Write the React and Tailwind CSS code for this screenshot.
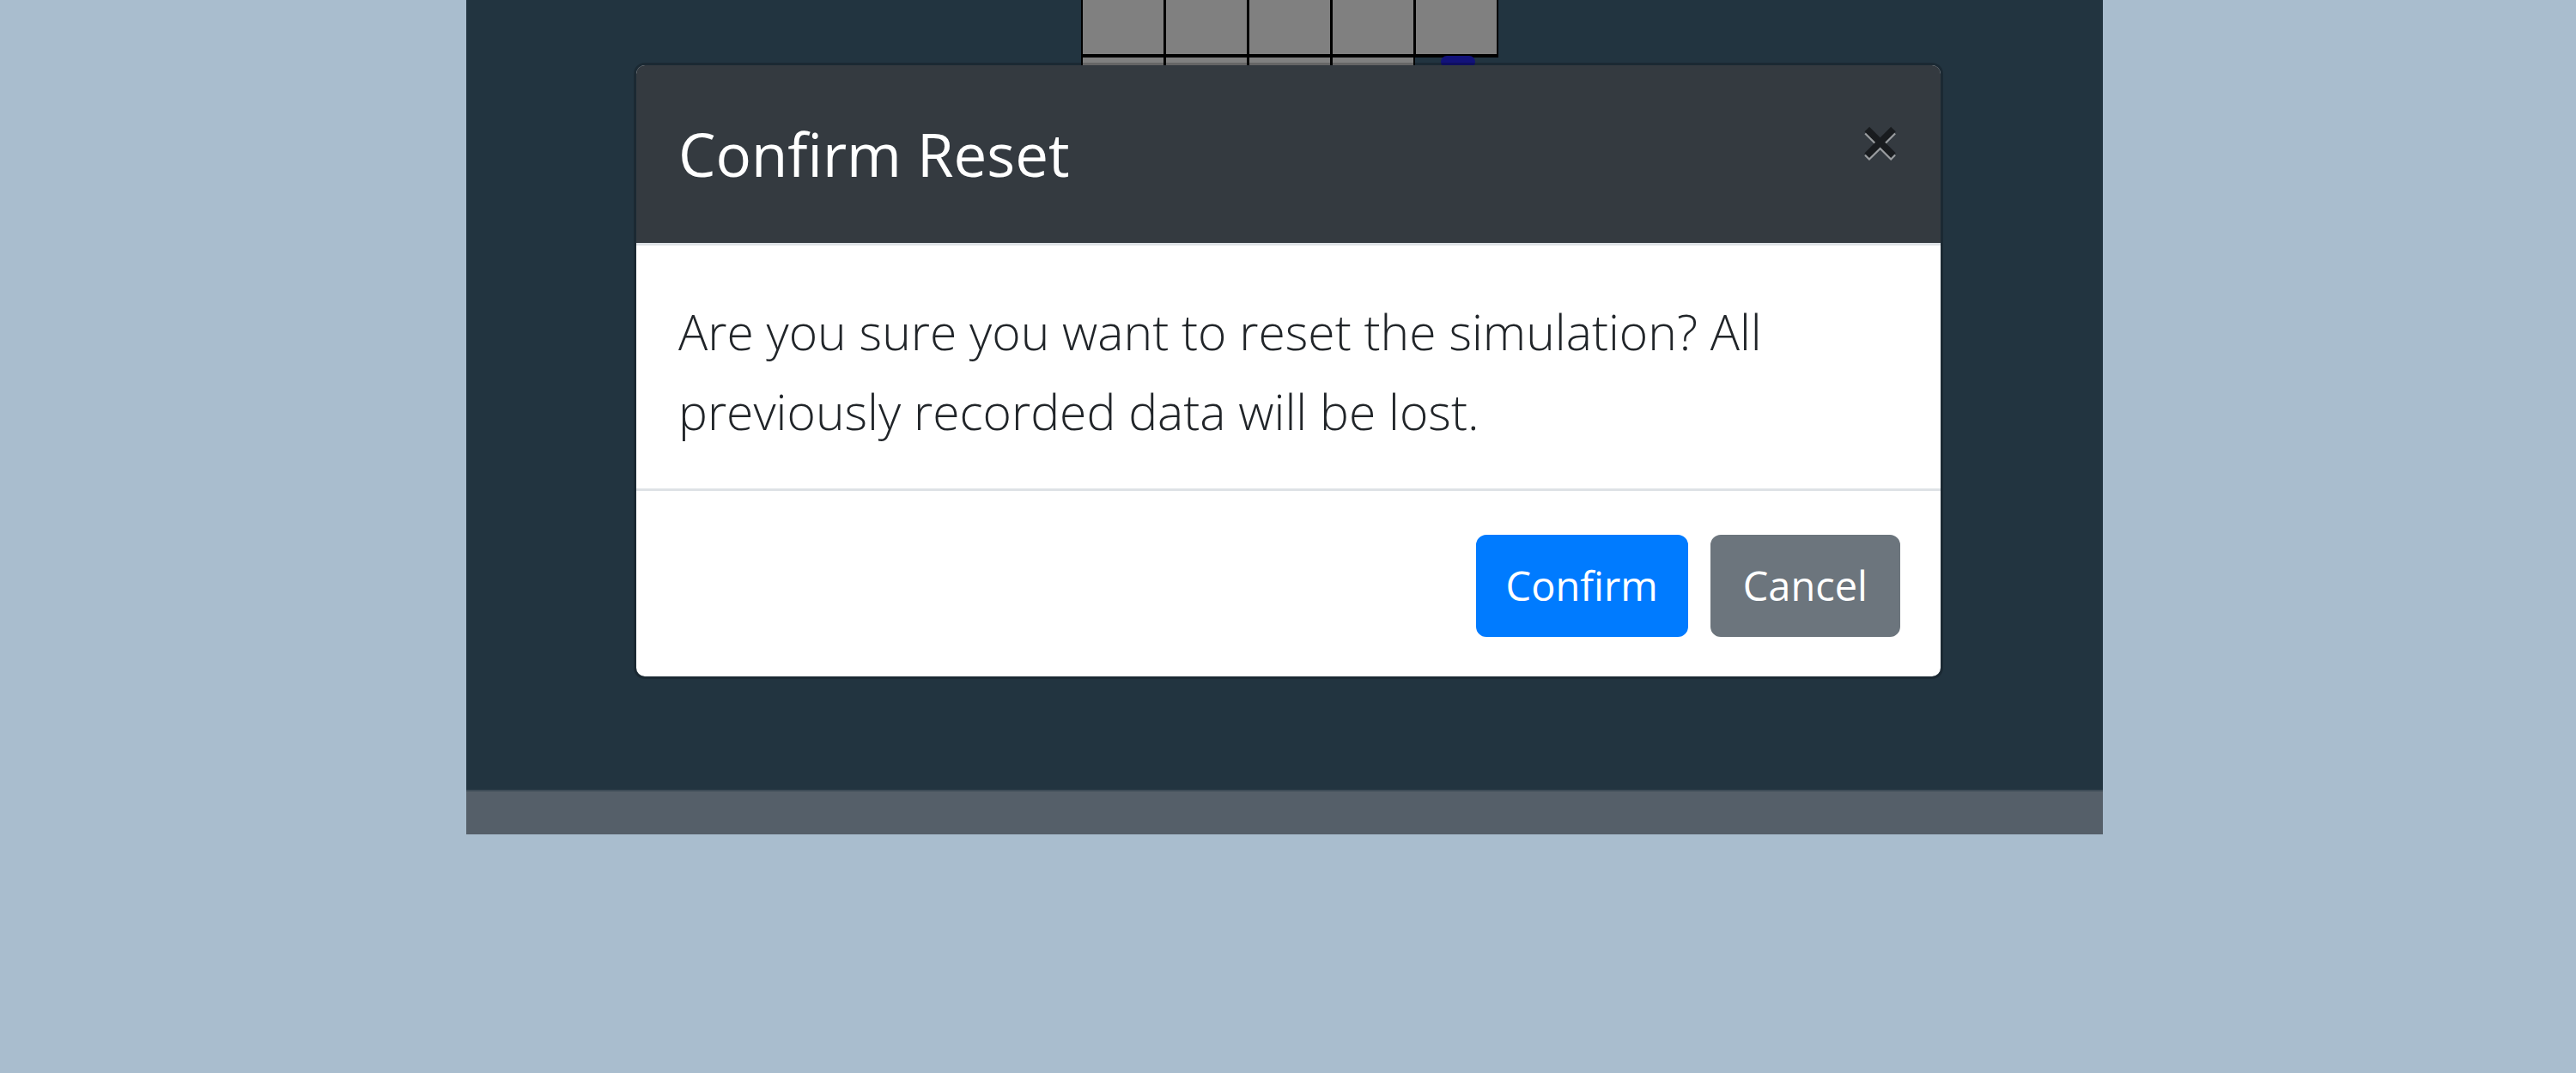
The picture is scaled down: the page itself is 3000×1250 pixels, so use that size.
import React from "react";

function Board() {
  const cells = [0, 1, 2, 3, 4];
  return (
    <div className="ml-[716px] w-[486px]">
      <div className="flex gap-[3px] bg-black px-[2px] pb-[4px]">
        {cells.map((c) => (
          <div key={c} className="h-[63px] w-[94px] bg-[#808080]" />
        ))}
      </div>
      <div className="flex gap-[3px]">
        <div className="flex gap-[3px] bg-black px-[2px]">
          {cells.slice(0, 4).map((c) => (
            <div key={c} className="h-[40px] w-[94px] bg-[#808080]" />
          ))}
        </div>
        <div className="flex w-[94px] justify-center">
          <div className="mt-[-2px] h-[14px] w-[40px] rounded-full bg-[#12127a]" />
        </div>
      </div>
    </div>
  );
}

function ConfirmResetModal() {
  return (
    <div className="absolute left-[195px] top-[73px] w-[1525px] overflow-hidden rounded-[13px] border-[3px] border-black/20 bg-white bg-clip-padding font-['Open_Sans',sans-serif]">
      <div className="flex items-start justify-between border-b-[3px] border-[#dee2e6] bg-[#343a40] px-[49px] pb-[49px] pt-[48px]">
        <h4 className="text-[69px] leading-[110px] font-normal text-white">
          Confirm Reset
        </h4>
        <button className="mt-[4px] h-[73px] font-['Liberation_Sans',sans-serif] text-[73px] leading-[73px] font-bold text-black opacity-50 [text-shadow:0_3px_0_#fff]">
          ×
        </button>
      </div>
      <div className="px-[49px] pb-[43px] pt-[54px]">
        <p className="text-[57px] leading-[93px] font-light text-[#212529]">
          Are you sure you want to reset the simulation? All previously
          recorded data will be lost.
        </p>
      </div>
      <div className="flex justify-end gap-[26px] border-t-[3px] border-[#dee2e6] px-[47px] pb-[46px] pt-[51px]">
        <button className="rounded-[12px] border-[3px] border-[#007bff] bg-[#007bff] px-[32px] py-[18px] text-[47px] leading-[77px] text-white">
          Confirm
        </button>
        <button className="rounded-[12px] border-[3px] border-[#6c757d] bg-[#6c757d] px-[35px] py-[18px] text-[47px] leading-[77px] text-white">
          Cancel
        </button>
      </div>
    </div>
  );
}

export default function App() {
  return (
    <div className="min-h-[1250px] w-full bg-[#a9bdce]">
      <div className="ml-[543px] w-[1906px]">
        <div className="relative h-[920px] overflow-hidden bg-[#223440]">
          <Board />
          <ConfirmResetModal />
        </div>
        <div className="h-[52px] border-t-[2px] border-[#3e4c57] bg-[#555f69]" />
      </div>
    </div>
  );
}
